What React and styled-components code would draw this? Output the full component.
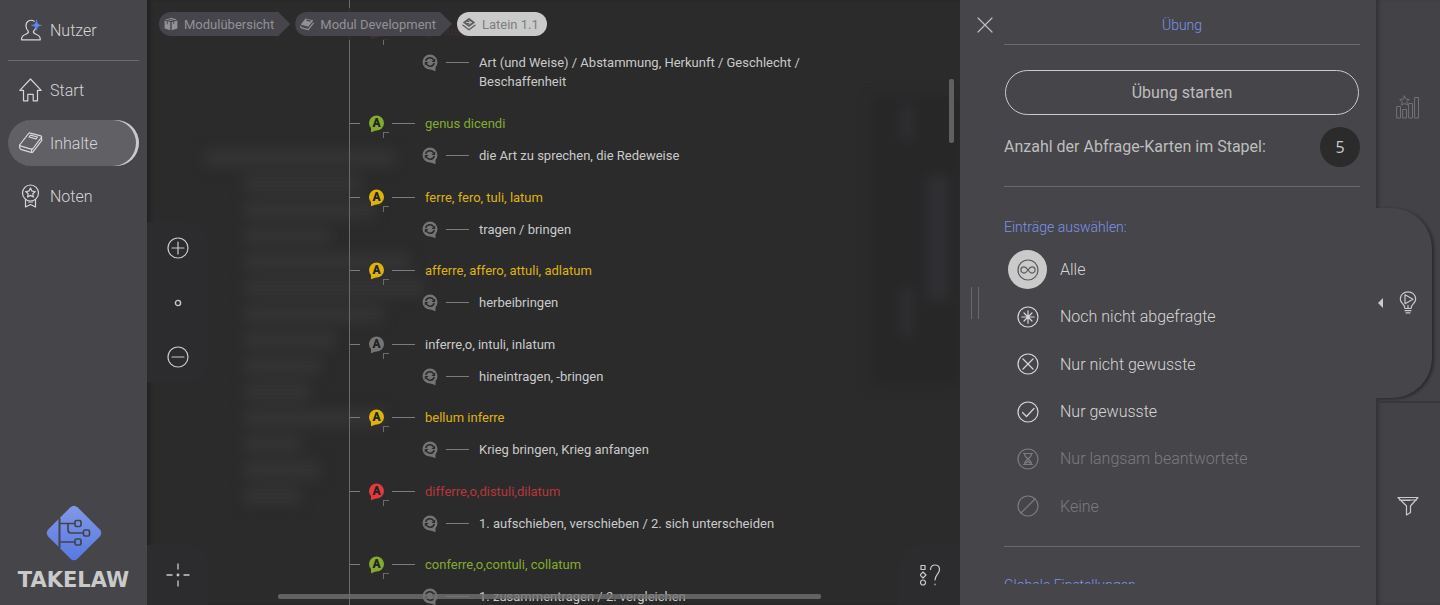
import React from "react";
import styled, { createGlobalStyle, css } from "styled-components";

const c = {
  panel: "#464549",
  rail: "#434246",
  canvas: "#2b2b2b",
  dark: "#2c2c2e",
  text: "#bebebe",
  bright: "#cacaca",
  line: "#6a696c",
  muted: "#7c7b7f",
  blue: "#7c93ea",
  green: "#83ab2d",
  yellow: "#dfb20b",
  red: "#e23a3e",
  grey: "#757575",
};

const GlobalStyle = createGlobalStyle`
  *, *::before, *::after { box-sizing: border-box; }
  body { margin: 0; background: ${c.canvas}; font-family: Roboto, "Liberation Sans", sans-serif; color: ${c.text}; }
  button, input { font: inherit; color: inherit; }
  button { background: none; border: 0; padding: 0; cursor: pointer; }
  a { color: inherit; text-decoration: none; }
  svg { display: block; flex: none; }
`;

const Page = styled.div`
  display: grid;
  grid-template-columns: 147px minmax(0, 1fr) 416px 64px;
  height: 100vh;
  overflow: hidden;
`;

/* ---------- sidebar ---------- */

const Sidebar = styled.aside`
  display: flex;
  flex-direction: column;
  padding: 7px 8px 14px;
  background: ${c.panel};
`;

const Nav = styled.nav`
  display: flex;
  flex-direction: column;
  gap: 7px;
`;

const NavItem = styled.a`
  display: flex;
  align-items: center;
  gap: 7px;
  height: 46px;
  padding-left: 11px;
  border-radius: 23px;
  font-size: 16px;
  font-weight: 300;
  color: #d6d6d6;
  ${(p) =>
    p.$active &&
    css`
      background: #616065;
      box-shadow: inset -3px 0 0 ${c.bright};
    `}
`;

const Divider = styled.hr`
  flex: none;
  width: 100%;
  height: 1px;
  margin: 0;
  border: 0;
  background: ${c.line};
`;

const NavDivider = styled(Divider)`
  margin-bottom: -1px;
`;

const Brand = styled.a`
  display: flex;
  flex-direction: column;
  align-items: center;
  gap: 8px;
  margin-top: auto;
  font: 700 21px/22px "DejaVu Sans", sans-serif;
  color: ${c.bright};
`;

/* ---------- canvas ---------- */

const Canvas = styled.main`
  position: relative;
  overflow: hidden;
  background: ${c.canvas};
  box-shadow: inset 4px 0 4px -2px #1f1f20;
`;

const Ghosts = styled.div`
  position: absolute;
  top: 151px;
  left: 58px;
  display: flex;
  flex-direction: column;
  gap: 12px;
  filter: blur(7px);
`;

const Ghost = styled.span`
  width: ${(p) => p.$w}px;
  height: 14px;
  margin-left: ${(p) => (p.$root ? 0 : 40)}px;
  background: #363636;
`;

const Shade = styled.div`
  position: absolute;
  top: 96px;
  right: 0;
  width: 88px;
  height: 290px;
  background: #272728;
  filter: blur(6px);
`;

const ShadeBar = styled.span`
  position: absolute;
  top: ${(p) => p.$top}px;
  left: ${(p) => p.$left}px;
  width: ${(p) => p.$w}px;
  height: ${(p) => p.$h}px;
  background: #303034;
`;

const Crumbs = styled.nav`
  position: absolute;
  z-index: 2;
  top: 8px;
  left: 8px;
  display: flex;
  gap: 5px;
  padding: 4px;
  background: rgba(43, 43, 43, 0.85);
`;

const Crumb = styled.a`
  display: flex;
  align-items: center;
  gap: 6px;
  height: 24px;
  padding: 0 16px 0 5px;
  border-radius: 12px 0 0 12px;
  background: #46454b;
  color: #929196;
  font-size: 13px;
  clip-path: polygon(0 0, calc(100% - 12px) 0, 100% 50%, calc(100% - 12px) 100%, 0 100%);
  ${(p) =>
    p.$current &&
    css`
      padding-right: 8px;
      border-radius: 12px;
      clip-path: none;
      background: ${c.bright};
      color: #7e7e7e;
    `}
`;

const Tree = styled.div`
  position: relative;
  margin-left: 202px;
  padding-top: 21px;
  border-left: 1px solid #6a6a6a;
  font-size: 13px;
  line-height: 19px;
`;

const Entries = styled.div`
  display: grid;
  grid-auto-rows: 1fr;
  height: 515px;
`;

const Entry = styled.section`
  display: flex;
  flex-direction: column;
  gap: 13px;
  padding-bottom: ${(p) => (p.$first ? 23 : 0)}px;
`;

const Row = styled.div`
  display: flex;
  align-items: flex-start;
  padding-left: ${(p) => (p.$child ? 72 : 0)}px;
  color: ${(p) => p.$color || c.bright};
`;

const Dash = styled.span`
  flex: none;
  width: ${(p) => p.$w}px;
  height: 1px;
  margin-top: 9px;
  background: #7c7c7c;
`;

const Bubble = styled.span`
  position: relative;
  flex: none;
  display: block;
  width: 17px;
  margin: 1px 7px 0 ${(p) => (p.$child ? 0 : 8)}px;
`;

const Corner = styled.span`
  position: absolute;
  top: 17px;
  left: 15px;
  width: 6px;
  height: 6px;
  border: solid #6c6c70;
  border-width: 1px 0 0 1px;
`;

const Label = styled.span`
  max-width: 340px;
  margin-left: 10px;
`;

const Dock = styled.div`
  position: absolute;
  z-index: 1;
  display: flex;
  flex-direction: column;
  align-items: center;
  justify-content: center;
  background: ${c.dark};
  color: ${c.bright};
`;

const ZoomDock = styled(Dock)`
  left: 0;
  top: 222px;
  width: 61px;
  height: 160px;
  justify-content: space-between;
  padding: 15px 0 14px;
  border-radius: 0 20px 20px 0;
`;

const CenterDock = styled(Dock)`
  left: 0;
  bottom: 0;
  width: 61px;
  height: 60px;
  border-radius: 0 20px 0 0;
`;

const LegendDock = styled(Dock)`
  right: 0;
  bottom: 0;
  width: 61px;
  height: 60px;
  border-radius: 20px 0 0 0;
`;

const ScrollY = styled.div`
  position: absolute;
  top: 79px;
  right: 6px;
  width: 5px;
  height: 64px;
  border-radius: 2px;
  background: #606060;
`;

const ScrollX = styled.div`
  position: absolute;
  bottom: 6px;
  left: 131px;
  right: 139px;
  height: 5px;
  border-radius: 2px;
  background: rgba(112, 112, 112, 0.8);
`;

/* ---------- exercise panel ---------- */

const Panel = styled.section`
  display: grid;
  grid-template-columns: 44px minmax(0, 1fr);
  padding: 0 16px 21px 0;
  min-height: 0;
  background: ${c.panel};
`;

const PanelEdge = styled.div`
  display: flex;
  flex-direction: column;
  justify-content: space-between;
  padding: 17px 0 0 10px;
`;

const Grip = styled.div`
  width: 8px;
  height: 32px;
  margin-bottom: 265px;
  margin-left: 1px;
  border: solid #68676b;
  border-width: 0 1px;
`;

const PanelBody = styled.div`
  display: flex;
  flex-direction: column;
  overflow: hidden;
`;

const PanelTitle = styled.h2`
  margin: 0;
  padding-top: 7px;
  flex: none;
  font-size: 14px;
  font-weight: 300;
  line-height: 37px;
  text-align: center;
  color: ${c.blue};
`;

const StartButton = styled.button`
  flex: none;
  height: 45px;
  margin: 25px 1px 11px;
  border: 1px solid ${c.bright};
  border-radius: 23px;
  font-size: 16px;
`;

const CountRow = styled.label`
  display: flex;
  align-items: center;
  justify-content: space-between;
  flex: none;
  height: 60px;
  padding-bottom: 19px;
  font-size: 16px;
`;

const CountInput = styled.input`
  width: 40px;
  height: 40px;
  padding: 0;
  border: 0;
  border-radius: 50%;
  background: #2b2b2c;
  color: ${c.bright};
  text-align: center;
  font: 16px "Open Sans", sans-serif;
`;

const Options = styled.fieldset`
  flex: none;
  min-width: 0;
  margin: 0;
  padding: 30px 0 16px;
  border: 0;
`;

const GroupTitle = styled.legend`
  float: left;
  width: 100%;
  padding: 0;
  margin-bottom: 9px;
  font-size: 14px;
  font-weight: 300;
  line-height: 20px;
  color: ${c.blue};
`;

const OptionList = styled.div`
  clear: both;
  display: grid;
  grid-auto-rows: 1fr;
  height: 284px;
`;

const Option = styled.label`
  display: flex;
  align-items: center;
  gap: 13px;
  padding-left: 4px;
  font-size: 16px;
  font-weight: 300;
  color: ${(p) => (p.$off ? c.muted : "#d6d6d6")};
`;

const OptionMark = styled.span`
  display: grid;
  place-items: center;
  width: 39px;
  height: 39px;
  border-radius: 50%;
  background: ${(p) => (p.$on ? c.bright : "transparent")};
  color: ${(p) => (p.$on ? "#59585c" : "inherit")};
`;

const Radio = styled.input`
  position: absolute;
  opacity: 0;
  margin: 0;
`;

const NextTitle = styled.h3`
  flex: none;
  margin: 0;
  padding-top: 28px;
  font-size: 14px;
  font-weight: 300;
  line-height: 20px;
  color: ${c.blue};
`;

/* ---------- rail ---------- */

const Rail = styled.nav`
  display: flex;
  flex-direction: column;
  background: ${c.rail};
  box-shadow: inset 4px 0 4px -2px #2f2f32;
`;

const RailButton = styled.button`
  flex: 1 1 0;
  display: grid;
  place-items: center;
  padding-top: ${(p) => p.$top}px;
  color: ${(p) => (p.$off ? "#727175" : c.bright)};
`;

const RailTab = styled.button`
  display: flex;
  align-items: center;
  flex: none;
  height: 190px;
  margin: 2px 8px 0 0;
  gap: 14px;
  border-radius: 0 40px 40px 0;
  background: ${c.panel};
  box-shadow: 2px 1px 3px #29292b;
  clip-path: inset(-6px -8px -6px 0);
  color: ${c.bright};
`;

const RailRule = styled(Divider)`
  height: 2px;
  margin-top: 3px;
  background: #38373b;
`;

/* ---------- icons ---------- */

const Icon = ({ size = 24, w = size, h = size, vb, sw = 1.2, children, ...rest }) => (
  <svg
    width={w}
    height={h}
    viewBox={vb || `0 0 ${w} ${h}`}
    fill="none"
    stroke="currentColor"
    strokeWidth={sw}
    strokeLinejoin="round"
    strokeLinecap="round"
    aria-hidden="true"
    {...rest}
  >
    {children}
  </svg>
);

const UserIcon = () => (
  <Icon>
    <path d="M15.2 3.2C11 .8 6.8 3.500 7 8c.1 2.300.9 4.200 2.300 5.200.5 1.900-.4 2.400-2.400 3-3 .9-4.500 1.900-4.400 5.600h18.800c.1-3.700-1.400-4.700-4.400-5.600-2-.6-2.900-1.100-2.400-3 .9-.7 1.500-1.500 1.800-2.600" />
    <path d="M17.500 2.200c.6 3.500 1.500 4.500 5 5.100-3.500.6-4.400 1.600-5 5.100-.6-3.500-1.500-4.500-5-5.100 3.500-.6 4.400-1.600 5-5.100z" fill="#5f86f2" stroke="#5f86f2" strokeWidth=".6" />
  </Icon>
);

const HomeIcon = () => (
  <Icon>
    <path d="M11.500 1L.8 12.300h3.700v10.500h4.300v-6.500h5.400v6.500h4.300V12.300h3.700z" />
  </Icon>
);

const BookIcon = () => (
  <Icon>
    <path d="M1 13.500L9.500 2.600c.5-.6 1.200-.8 2-.5l10.300 2.700c.8.2 1.100.8.6 1.500L14 17.500c-.5.6-1.200.8-2 .6L2 15.200c-1.500-.5-1.600-1.500-1-1.700" />
    <path d="M.8 14.200c-.5 2 .1 3.900 1.700 4.400l9.500 2.800c.8.200 1.500 0 2-.6l8.600-11.200c.3-.4.200-1-.1-1.500M12.600 18v2.600M22.500 6.500v2.800" />
    <path d="M11.500 4.200l7 1.800-1.400 1.800-7-1.800z" />
  </Icon>
);

const starPath = (cx, cy, r) =>
  "M" +
  Array.from({ length: 10 }, (_, i) => {
    const a = -Math.PI / 2 + (i * Math.PI) / 5;
    const k = i % 2 ? r * 0.48 : r;
    return `${(cx + k * Math.cos(a)).toFixed(1)} ${(cy + k * Math.sin(a)).toFixed(1)}`;
  }).join("L") +
  "z";

const AwardIcon = () => (
  <Icon>
    <circle cx="11.500" cy="9" r="8" />
    <path d={starPath(11.5, 9, 5)} />
    <path d="M6.500 15.500V23l5-2.500 5 2.500v-7.500M9.500 18h4" />
  </Icon>
);

const LogoMark = () => (
  <svg width="56" height="56" viewBox="0 0 56 56" aria-hidden="true">
    <defs>
      <linearGradient id="brand" x1="0" y1="0" x2="0" y2="1">
        <stop offset="0" stopColor="#8198e6" />
        <stop offset="1" stopColor="#5779e2" />
      </linearGradient>
    </defs>
    <path d="M24.500 2.200Q28-.8 31.500 2.200L53.800 24.500Q56.800 28 53.800 31.500L31.500 53.800Q28 56.800 24.500 53.800L2.200 31.500Q-.8 28 2.200 24.500z" fill="url(#brand)" />
    <g fill="none" stroke="#434349" strokeWidth="1.700">
      <path d="M13.500 13v30" strokeWidth="2" />
      <path d="M14 18.500h15M22 18.500v6.500q0 3 3 3h12M14 37h15" />
      <rect x="29" y="15.500" width="6" height="6" rx="1.500" />
      <rect x="37.500" y="25" width="6" height="6" rx="1.500" />
      <rect x="29" y="34" width="6" height="6" rx="1.500" />
    </g>
  </svg>
);

const BoxIcon = () => (
  <Icon w={14} h={14} stroke="none" fill="currentColor">
    <path d="M7 .8l5.800 1.600L7 4 1.200 2.400zM.6 3.400l5.700 1.500v8.400L.6 11.600zM13.400 3.400L7.700 4.900v8.400l5.700-1.700z" />
    <path d="M3.700 1.700l6 1.600v3.200M3.200 4v3" stroke="#46454b" strokeWidth=".9" fill="none" />
  </Icon>
);

const SmallBookIcon = () => (
  <Icon w={14} h={14} stroke="none" fill="currentColor">
    <path d="M5.500 1.500l7.800 1.900-5 6.400L.8 7.600z" />
    <path d="M.9 9c-.3.900 0 1.700.8 1.900l6.500 1.800 5.200-6.500" fill="none" stroke="currentColor" strokeWidth="1.200" />
    <path d="M6.700 3.200l3.600.9" stroke="#46454b" />
  </Icon>
);

const LayersIcon = () => (
  <Icon w={14} h={14} stroke="none" fill="#5f5f5f">
    <path d="M7 .8l6.200 4.700L7 10 .8 5.500z" />
    <path d="M1 8.200l6 4.500 6-4.500" fill="none" stroke="#5f5f5f" strokeWidth="1.400" />
    <path d="M4.500 5.500h5M7 3.800L9.300 5.500 7 7.200" stroke={c.bright} strokeWidth=".9" fill="none" />
  </Icon>
);

const AnswerBubble = ({ color }) => (
  <Bubble>
    <svg width="17" height="18" viewBox="0 0 17 18" role="img" aria-label="A">
      <circle cx="8.500" cy="8" r="7.500" fill={color} />
      <path d="M3 11.500v5.800l6-2.300z" fill={color} />
      <text x="8.500" y="12" textAnchor="middle" fontSize="12" fontWeight="900" fontFamily="Roboto, sans-serif" fill="#232323">
        A
      </text>
    </svg>
    <Corner />
  </Bubble>
);

const TurnBubble = () => (
  <Bubble $child>
    <svg width="17" height="18" viewBox="0 0 17 18" aria-hidden="true">
      <circle cx="8" cy="8" r="7.500" fill={c.grey} />
      <path d="M13.500 11.500v5.800l-6-2.300z" fill={c.grey} />
      <g fill="none" stroke="#2a2a2a" strokeWidth="1.500">
        <path d="M3.800 7C4.600 3.200 9.600 2.600 11.600 5.800M12.200 9c-.8 3.800-5.800 4.400-7.800 1.200" />
      </g>
      <path d="M13.200 4.600v3.400H9.400zM2.800 11.400V8h3.800z" fill="#2a2a2a" />
    </svg>
  </Bubble>
);

const Ring = ({ children, sw }) => (
  <Icon size={22} sw={sw}>
    <circle cx="11" cy="11" r="10" />
    {children}
  </Icon>
);

const optionIcons = {
  all: <path d="M11 11C9.500 8.800 8.500 7.900 7 7.900a3.100 3.100 0 0 0 0 6.200c1.500 0 2.500-.9 4-3.100s2.500-3.100 4-3.100a3.100 3.100 0 0 1 0 6.200c-1.500 0-2.500-.9-4-3.100z" />,
  fresh: <path d="M11 4.800v12.400M4.800 11h12.400M7 7l8 8M15 7l-8 8" />,
  wrong: <path d="M6 6l10 10M16 6L6 16" />,
  right: <path d="M5.500 11.500l4 4 7.500-8" />,
  slow: <path d="M6.500 5.500h9M6.500 16.500h9M7.500 5.500c0 3 1.500 4 3.500 5.500 2-1.500 3.500-2.500 3.500-5.500M7.500 16.500c0-3 1.500-4 3.500-5.500 2 1.500 3.500 2.500 3.500 5.500M9 15l2-1.500 2 1.500" />,
  none: <path d="M4 18L18 4" />,
};

/* ---------- data ---------- */

const entries = [
  { color: c.green, term: "genus dicendi", text: "die Art zu sprechen, die Redeweise" },
  { color: c.yellow, term: "ferre, fero, tuli, latum", text: "tragen / bringen" },
  { color: c.yellow, term: "afferre, affero, attuli, adlatum", text: "herbeibringen" },
  { color: c.grey, label: c.bright, term: "inferre,o, intuli, inlatum", text: "hineintragen, -bringen" },
  { color: c.yellow, term: "bellum inferre", text: "Krieg bringen, Krieg anfangen" },
  { color: c.red, label: "#b8363b", term: "differre,o,distuli,dilatum", text: "1. aufschieben, verschieben / 2. sich unterscheiden" },
  { color: c.green, term: "conferre,o,contuli, collatum", text: "1. zusammentragen / 2. vergleichen" },
];

const options = [
  { id: "all", label: "Alle" },
  { id: "fresh", label: "Noch nicht abgefragte" },
  { id: "wrong", label: "Nur nicht gewusste" },
  { id: "right", label: "Nur gewusste" },
  { id: "slow", label: "Nur langsam beantwortete", off: true },
  { id: "none", label: "Keine", off: true },
];

const ghostWidths = [190, 115, 130, 85, 165, 178, 138, 90, 75, 65, 140, 55, 75, 55];

const TreeEntry = ({ color, label, term, text, first }) => (
  <Entry $first={first}>
    <Row $color={label || color}>
      <Dash $w={10} />
      <AnswerBubble color={color} />
      <Dash $w={23} />
      <Label>{term}</Label>
    </Row>
    <Row $child>
      <TurnBubble />
      <Dash $w={23} />
      <Label>{text}</Label>
    </Row>
  </Entry>
);

export default function App() {
  const [mode, setMode] = React.useState("all");
  const [count, setCount] = React.useState("5");

  return (
    <Page>
      <GlobalStyle />
      <Sidebar>
        <Nav>
          <NavItem href="#nutzer"><UserIcon />Nutzer</NavItem>
          <NavDivider />
          <NavItem href="#start"><HomeIcon />Start</NavItem>
          <NavItem href="#inhalte" $active aria-current="page"><BookIcon />Inhalte</NavItem>
          <NavItem href="#noten"><AwardIcon />Noten</NavItem>
        </Nav>
        <Brand href="#home"><LogoMark />TAKELAW</Brand>
      </Sidebar>

      <Canvas>
        <Ghosts>
          {ghostWidths.map((w, i) => <Ghost key={i} $w={w} $root={i === 0} />)}
        </Ghosts>
        <Shade>
          <ShadeBar $top={10} $left={30} $w={10} $h={34} />
          <ShadeBar $top={80} $left={56} $w={20} $h={124} />
          <ShadeBar $top={192} $left={30} $w={10} $h={48} />
        </Shade>
        <Tree>
          <TreeEntry first color={c.red} label="#b8363b" term="genus, generis" text="Art (und Weise) / Abstammung, Herkunft / Geschlecht / Beschaffenheit" />
          <Entries>
            {entries.map((e) => <TreeEntry key={e.term} {...e} />)}
          </Entries>
        </Tree>
        <Crumbs aria-label="Pfad">
          <Crumb href="#module"><BoxIcon />Modulübersicht</Crumb>
          <Crumb href="#development"><SmallBookIcon />Modul Development</Crumb>
          <Crumb href="#latein" $current aria-current="page"><LayersIcon />Latein 1.1</Crumb>
        </Crumbs>
        <ZoomDock>
          <button aria-label="Vergrößern"><Ring><path d="M11 5v12M5 11h12" /></Ring></button>
          <button aria-label="Zoom zurücksetzen"><Icon size={8} sw={1.4}><circle cx="4" cy="4" r="2.600" /></Icon></button>
          <button aria-label="Verkleinern"><Ring><path d="M5 11h12" /></Ring></button>
        </ZoomDock>
        <CenterDock>
          <button aria-label="Zentrieren">
            <Icon size={24} sw={1.3} strokeLinecap="butt">
              <path d="M12 .5v6M12 17.500v6M.5 12h6M17.500 12h6" />
              <circle cx="12" cy="12" r=".8" fill="currentColor" />
            </Icon>
          </button>
        </CenterDock>
        <LegendDock>
          <button aria-label="Legende">
            <Icon w={20} h={22} sw={1.2}>
              <rect x="1" y="1.500" width="4" height="4" />
              <path d="M3 8l3 3-3 3-3-3z" />
              <circle cx="3" cy="18.500" r="2.500" />
              <path d="M10.500 5.500C10.500 2.500 12.500 1 15 1s4.500 1.700 4.500 4.500c0 4-4.500 5.500-4.500 10.500M15 20v.7" />
            </Icon>
          </button>
        </LegendDock>
        <ScrollY />
        <ScrollX />
      </Canvas>

      <Panel>
        <PanelEdge>
          <button aria-label="Schließen"><Icon w={30} h={16} sw={1.2}><path d="M8 1l14 14M22 1L8 15" /></Icon></button>
          <Grip />
        </PanelEdge>
        <PanelBody>
          <PanelTitle>Übung</PanelTitle>
          <Divider />
          <StartButton>Übung starten</StartButton>
          <CountRow>
            Anzahl der Abfrage-Karten im Stapel:
            <CountInput value={count} onChange={(e) => setCount(e.target.value)} />
          </CountRow>
          <Divider />
          <Options>
            <GroupTitle>Einträge auswählen:</GroupTitle>
            <OptionList>
              {options.map((o) => (
                <Option key={o.id} $off={o.off}>
                  <Radio type="radio" name="mode" checked={mode === o.id} disabled={o.off} onChange={() => setMode(o.id)} />
                  <OptionMark $on={mode === o.id}><Ring>{optionIcons[o.id]}</Ring></OptionMark>
                  {o.label}
                </Option>
              ))}
            </OptionList>
          </Options>
          <Divider />
          <NextTitle>Globale Einstellungen</NextTitle>
        </PanelBody>
      </Panel>

      <Rail>
        <RailButton $off $top={8} aria-label="Statistik">
          <Icon w={24} h={24} sw={1}>
            <path d="M1 11.500h3.500v11.500H1zM7 14.500h3.500V23H7zM13 8.500h3.500V23H13zM19 2.500h3.500V23H19z" />
            <path d={starPath(8.5, 6, 5)} />
          </Icon>
        </RailButton>
        <RailTab aria-label="Übung">
          <Icon w={8} h={12} stroke="none" fill="currentColor"><path d="M7 1v10L2 6z" /></Icon>
          <Icon w={20} h={24} sw={1.2}>
            <path d="M7 17.500c0-2-.8-3.200-2.400-4.900C3 11 2.300 10 2.300 8a7.700 7.200 0 0 1 15.400 0c0 2-.7 3-2.300 4.600-1.600 1.700-2.400 2.900-2.400 4.900zM7 19.700h6M8 21.800h4M10 17.500v-3.200" />
            <path d="M7 3.800v9l8-4.500z" />
          </Icon>
        </RailTab>
        <RailRule />
        <RailButton $top={4} aria-label="Filter">
          <Icon w={22} h={20} sw={1.2}>
            <path d="M1 1.500h20l-7.500 8.500v6.500L9.500 19v-9zM2.500 4h17M6 4.500h7" />
          </Icon>
        </RailButton>
      </Rail>
    </Page>
  );
}
